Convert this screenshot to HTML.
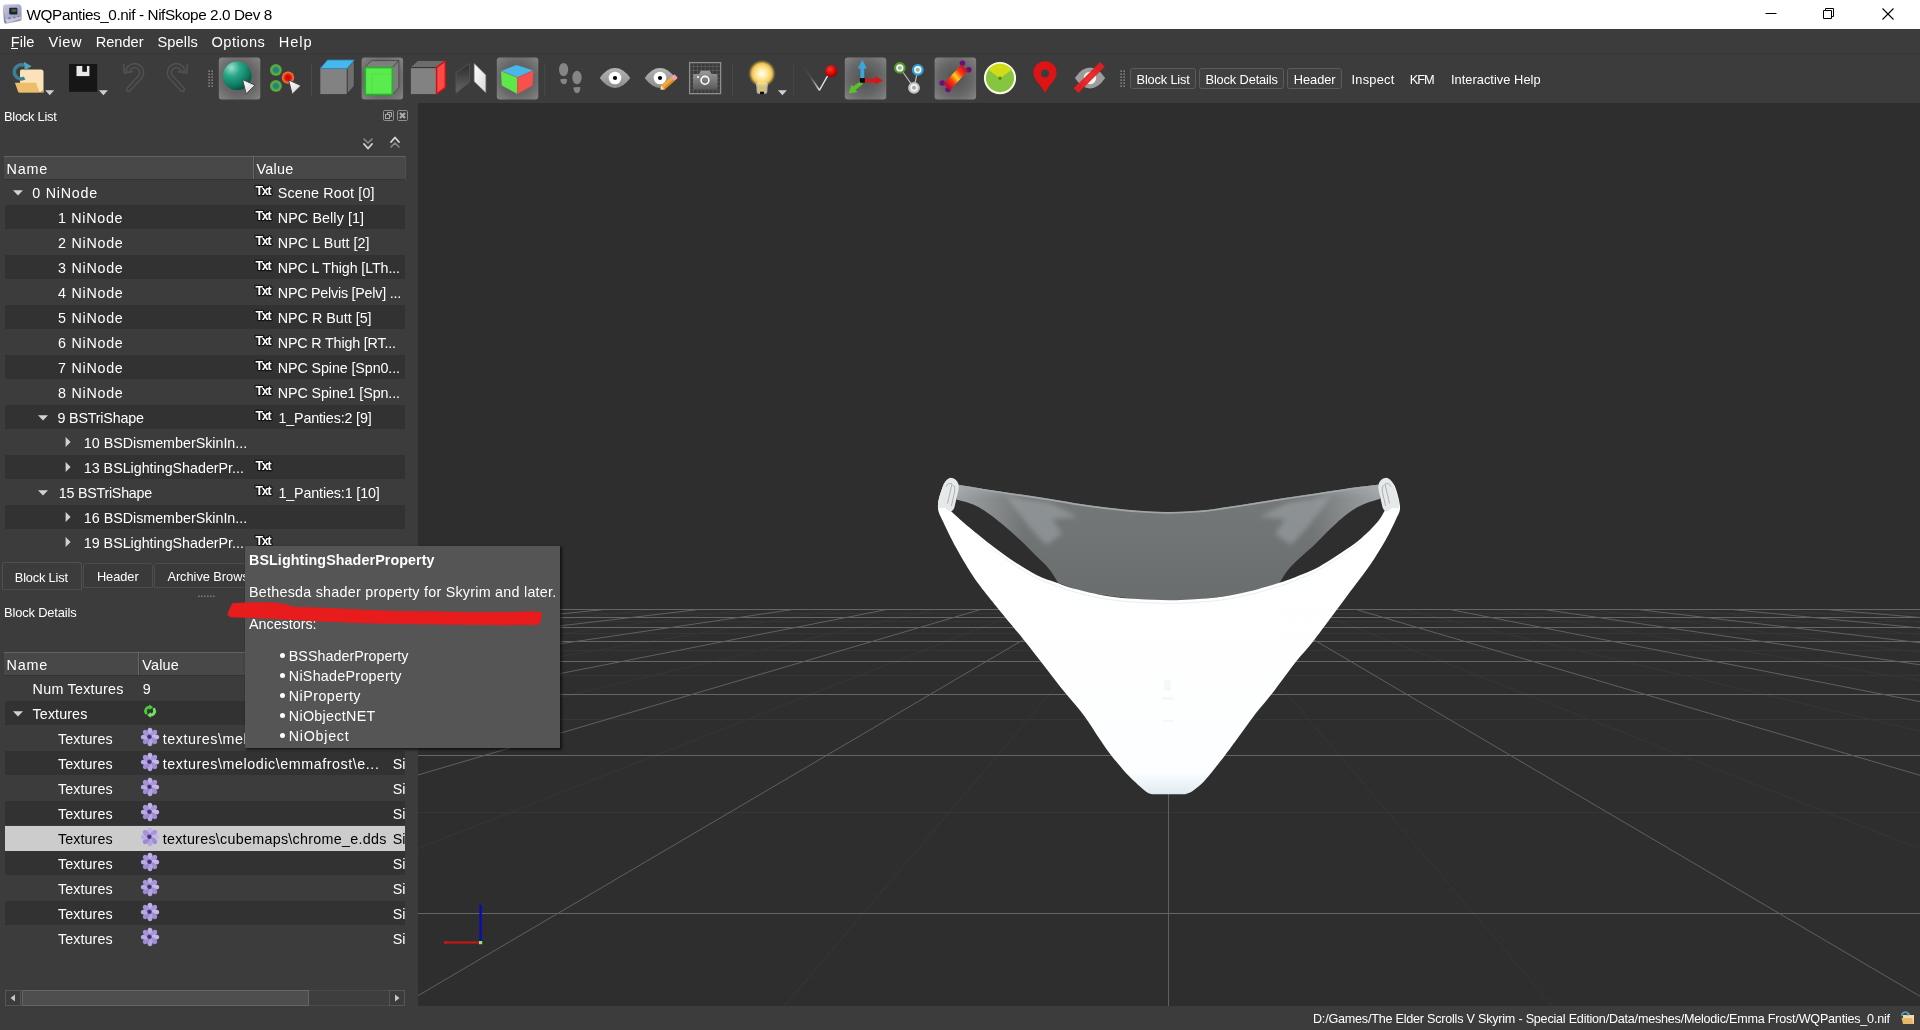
<!DOCTYPE html>
<html><head><meta charset="utf-8"><title>WQPanties_0.nif - NifSkope 2.0 Dev 8</title>
<style>
html,body{margin:0;padding:0}
body{width:1920px;height:1030px;overflow:hidden;position:relative;background:#3c3c3c;font-family:"Liberation Sans",sans-serif;}
.t{position:absolute;white-space:pre;}
.b{position:absolute;}
svg{position:absolute;overflow:visible}
#root{position:absolute;left:0;top:0;width:1920px;height:1030px;overflow:hidden;opacity:.999;background:#3c3c3c}
</style></head><body><div id="root">
<div class="b" style="left:0px;top:0px;width:1920px;height:29px;background:#ffffff;"></div>
<svg style="left:1.5px;top:4px" width="20" height="20" viewBox="0 0 20 20">
<defs><linearGradient id="ai" x1="0" y1="0" x2="1" y2="1"><stop offset="0" stop-color="#c9c9e4"/><stop offset="1" stop-color="#8c8ca8"/></linearGradient></defs>
<path d="M1 2.5 Q1 .5 3 .5 L16 .3 Q19.5 .5 19.6 4 L19.6 15 Q19.5 16.5 18 17 L5 19.6 Q2.5 19.8 2 18 Z" fill="url(#ai)"/>
<path d="M1.2 3 L3 14 L4.5 19.5 Q2.4 19.6 2 18Z" fill="#77779a" opacity=".7"/>
<rect x="7.2" y="3.8" width="8.2" height="6.8" rx="1" fill="#1b2330"/>
<rect x="9.5" y="5" width="5" height="3" fill="#4a6a48" opacity=".8"/>
<circle cx="7.5" cy="14.6" r="1.3" fill="#6d6d90"/><circle cx="12.4" cy="14" r="1.3" fill="#6d6d90"/><circle cx="16.6" cy="13.2" r="1.1" fill="#7d7da0"/>
<path d="M3 15.5 L19 12.5 L19 15 L5 19Z" fill="#e8e8f6" opacity=".55"/>
</svg>
<span class="t" style="left:26.60px;top:3.70px;font-size:15.3px;line-height:21px;color:#000;letter-spacing:-0.415px;">WQPanties_0.nif - NifSkope 2.0 Dev 8</span>
<svg style="left:1740px;top:0" width="180" height="29" viewBox="0 0 180 29" fill="none" stroke="#000" stroke-width="1">
<path d="M25.5 13.5 H36.5"/>
<path d="M83.5 10.5 H91.5 V18.5 H83.5Z M85.5 10.5 V8.5 H93.5 V16.5 H91.5"/>
<path d="M142.5 8.5 L153.5 19.5 M153.5 8.5 L142.5 19.5" stroke-width="1.1"/>
</svg>
<div class="b" style="left:0px;top:29px;width:1920px;height:26px;background:#3c3c3c;"></div>
<div class="b" style="left:0px;top:53px;width:1920px;height:2px;background:#393939;"></div>
<span class="t" style="left:10.70px;top:31.64px;font-size:14.6px;line-height:20px;color:#fff;letter-spacing:0.025px;">File</span>
<span class="t" style="left:48.40px;top:31.64px;font-size:14.6px;line-height:20px;color:#fff;letter-spacing:0.606px;">View</span>
<span class="t" style="left:95.70px;top:31.64px;font-size:14.6px;line-height:20px;color:#fff;">Render</span>
<span class="t" style="left:157.40px;top:31.64px;font-size:14.6px;line-height:20px;color:#fff;letter-spacing:0.147px;">Spells</span>
<span class="t" style="left:211.40px;top:31.64px;font-size:14.6px;line-height:20px;color:#fff;letter-spacing:0.531px;">Options</span>
<span class="t" style="left:278.70px;top:31.64px;font-size:14.6px;line-height:20px;color:#fff;letter-spacing:0.958px;">Help</span>
<div class="b" style="left:11px;top:48px;width:7px;height:1px;background:#fff;"></div>
<svg style="left:0;top:55px" width="1920" height="48" viewBox="0 55 1920 48"><defs>
<radialGradient id="chk" cx=".5" cy=".5" r=".75"><stop offset="0" stop-color="#505050"/><stop offset=".55" stop-color="#686868"/><stop offset="1" stop-color="#8a8a8a"/></radialGradient>
<radialGradient id="sph" cx=".3" cy=".22" r=".85"><stop offset="0" stop-color="#9ee0cc"/><stop offset=".35" stop-color="#2aa88a"/><stop offset=".75" stop-color="#0c7a60"/><stop offset="1" stop-color="#064a3a"/></radialGradient>
<linearGradient id="cur" x1="0" y1="0" x2="1" y2="1"><stop offset="0" stop-color="#ffffff"/><stop offset="1" stop-color="#d2d2d2"/></linearGradient>
<radialGradient id="gdot" cx=".5" cy=".5" r=".5"><stop offset="0" stop-color="#1f7f86"/><stop offset=".45" stop-color="#2a8a70"/><stop offset=".7" stop-color="#62b044"/><stop offset="1" stop-color="#4f9a35"/></radialGradient>
<radialGradient id="rdot" cx=".5" cy=".5" r=".5"><stop offset="0" stop-color="#d00000"/><stop offset=".5" stop-color="#e01808"/><stop offset=".8" stop-color="#f06a30"/><stop offset="1" stop-color="#e8783a"/></radialGradient>
<linearGradient id="eye" x1="0" y1="0" x2="0" y2="1"><stop offset="0" stop-color="#b4b4b4"/><stop offset="1" stop-color="#8c8c8c"/></linearGradient>
<radialGradient id="bulb" cx=".5" cy=".5" r=".5"><stop offset="0" stop-color="#fffef4"/><stop offset=".25" stop-color="#fff3c0"/><stop offset=".55" stop-color="#fbdc78"/><stop offset=".74" stop-color="#f2c654" stop-opacity=".95"/><stop offset=".86" stop-color="#e6b840" stop-opacity=".45"/><stop offset="1" stop-color="#d8aa30" stop-opacity="0"/></radialGradient>
<radialGradient id="rball" cx=".4" cy=".35" r=".65"><stop offset="0" stop-color="#ff3a2a"/><stop offset=".6" stop-color="#d80808"/><stop offset="1" stop-color="#8e0000"/></radialGradient>
<linearGradient id="bone" gradientUnits="userSpaceOnUse" x1="941" y1="88" x2="969" y2="63"><stop offset="0" stop-color="#7a0a7a"/><stop offset=".18" stop-color="#c8102a"/><stop offset=".35" stop-color="#ff3a10"/><stop offset=".5" stop-color="#ffd21e"/><stop offset=".65" stop-color="#ff3a10"/><stop offset=".82" stop-color="#c8102a"/><stop offset="1" stop-color="#7a0a7a"/></linearGradient>
<linearGradient id="camg" x1="0" y1="0" x2="0" y2="1"><stop offset="0" stop-color="#9a9a9a"/><stop offset="1" stop-color="#5c5c5c"/></linearGradient>
<linearGradient id="dkp" x1="0" y1="0" x2="0" y2="1"><stop offset="0" stop-color="#2c2c2c"/><stop offset="1" stop-color="#666"/></linearGradient>
<linearGradient id="whp" x1="0" y1="0" x2="1" y2="1"><stop offset="0" stop-color="#ffffff"/><stop offset="1" stop-color="#d8d8d8"/></linearGradient>
<filter id="b1"><feGaussianBlur stdDeviation="0.75"/></filter>
<filter id="b2"><feGaussianBlur stdDeviation="1.6"/></filter>
</defs><g>
<path d="M20 71.2 Q20 69.6 21.6 69.6 H41 Q43.5 69.6 43.5 72.2 V92.2 H20Z" fill="#fbe2b8"/>
<path d="M14.9 82.8 H36 L39.6 92.4 H18.4Z" fill="#eebd6c"/>
<path d="M39.6 92.4 H43.5 V89.5Z" fill="#dba653"/>
<path d="M24.6 78 A7 7 0 1 1 24 65.4" fill="none" stroke="#3c8095" stroke-width="3.5"/>
<path d="M23.8 61.8 L31.6 66.2 L24.8 70.6Z" fill="#55a3b9"/>
</g><path d="M45.2 90.2 h9 l-4.5 5z" fill="#cfcfcf"/><rect x="69" y="64" width="28.2" height="27.8" fill="#161616"/><rect x="76.5" y="66" width="12.9" height="10.1" fill="#e9e9e9"/><rect x="82.3" y="66" width="4.6" height="5.8" fill="#161616"/><path d="M98.9 90.2 h9 l-4.5 5z" fill="#cfcfcf"/><g fill="none" stroke-linecap="round" stroke-linejoin="round">
<g stroke="#505050" stroke-width="5.6"><path d="M128.6 89.4 L140.6 76.4 A7 7 0 1 0 128.2 70"/><path d="M169.4 89.4 L157.4 76.4 A7 7 0 1 1 169.8 70" transform="translate(13 0)"/></g>
<g stroke="#3c3c3c" stroke-width="2.4"><path d="M128.6 89.4 L140.6 76.4 A7 7 0 1 0 128.2 70"/><path d="M169.4 89.4 L157.4 76.4 A7 7 0 1 1 169.8 70" transform="translate(13 0)"/></g>
<path d="M123.6 64.5 L124.4 73.2 L132.6 71.6" stroke="#505050" stroke-width="1.8"/><path d="M187.4 64.5 L186.6 73.2 L178.4 71.6" stroke="#505050" stroke-width="1.8"/>
</g><rect x="208.3" y="70.3" width="1.7" height="1.7" fill="#7a7a7a"/><rect x="208.3" y="73.3" width="1.7" height="1.7" fill="#7a7a7a"/><rect x="208.3" y="76.3" width="1.7" height="1.7" fill="#7a7a7a"/><rect x="208.3" y="79.3" width="1.7" height="1.7" fill="#7a7a7a"/><rect x="208.3" y="82.3" width="1.7" height="1.7" fill="#7a7a7a"/><rect x="208.3" y="85.3" width="1.7" height="1.7" fill="#7a7a7a"/><rect x="211.3" y="70.3" width="1.7" height="1.7" fill="#7a7a7a"/><rect x="211.3" y="73.3" width="1.7" height="1.7" fill="#7a7a7a"/><rect x="211.3" y="76.3" width="1.7" height="1.7" fill="#7a7a7a"/><rect x="211.3" y="79.3" width="1.7" height="1.7" fill="#7a7a7a"/><rect x="211.3" y="82.3" width="1.7" height="1.7" fill="#7a7a7a"/><rect x="211.3" y="85.3" width="1.7" height="1.7" fill="#7a7a7a"/><rect x="218.8" y="57.5" width="41.5" height="42" rx="3" fill="url(#chk)"/><circle cx="237.2" cy="75.8" r="14.3" fill="url(#sph)"/><path d="M242.6 79.6 L255 85.2 L246.2 93.9Z" fill="url(#cur)" stroke="#3a3a3a" stroke-width=".9" stroke-linejoin="round"/><circle cx="275.9" cy="70" r="6" fill="url(#gdot)"/><circle cx="275.9" cy="86" r="6" fill="url(#gdot)"/><circle cx="288" cy="77.6" r="6.2" fill="url(#rdot)"/><path d="M288.6 80 L301 85.6 L292.2 94.3Z" fill="url(#cur)" stroke="#3a3a3a" stroke-width=".9" stroke-linejoin="round"/><path d="M311.5 64 V96" stroke="#4a4a4a" stroke-width="1"/><path d="M320.3 68.5 H347.2 V94.1 H320.3Z" fill="#828282"/><path d="M347.2 68.5 L354.3 60.2 V86 L347.2 94.1Z" fill="#6e6e6e" stroke="#2e2e2e" stroke-width=".8"/><path d="M320.3 68.5 L327.5 60 H354.3 L347.2 68.5Z" fill="#45b9ee" stroke="#2a86b8" stroke-width=".8"/><rect x="361.6" y="57.5" width="41.5" height="42" rx="3" fill="url(#chk)"/><path d="M365 67.4 L371.5 60.6 H398.8 V87.5 L392.5 94.6" fill="#7e7e7e" stroke="#4a4a4a" stroke-width=".9"/><path d="M392.5 67.4 L398.8 60.6" stroke="#3c3c3c" stroke-width=".9"/><rect x="365.3" y="67.6" width="27" height="26.9" fill="#5aec4e" stroke="#26b42a" stroke-width="1.6"/><path d="M372 74 H392 M372 74 V94" stroke="#48d840" stroke-width="1" opacity=".6"/><path d="M410.9 67.2 H436.1 V94.1 H410.9Z" fill="#828282"/><path d="M410.9 67.2 L418 60.9 H445.5 L436.1 67.2Z" fill="#6c6c6c"/><path d="M410.9 67.6 H436" stroke="#2e2e2e" stroke-width="1"/><path d="M436.6 67.4 L445.2 61.2 V87.6 L436.6 94Z" fill="#ff4a48" stroke="#cc1414" stroke-width="1.5" stroke-linejoin="round"/><path d="M456 72.5 L469.6 63.5 V82 L456 93Z" fill="url(#dkp)" stroke="#585858" stroke-width=".8"/><path d="M474.2 63.5 L485.8 75 V92.8 L474.2 81.5Z" fill="url(#whp)" stroke="#8a8a8a" stroke-width=".6"/><rect x="496.8" y="57.5" width="41.5" height="42" rx="3" fill="url(#chk)"/><path d="M501 71 L516.5 65 L533.3 70.5 L517.5 77.5Z" fill="#48b6ea"/><path d="M501 71 L517.5 77.5 V94 L501.8 85.5Z" fill="#5fe84a"/><path d="M517.5 77.5 L533.3 70.5 L532.5 85.5 L517.5 94Z" fill="#f8504c"/><path d="M501 71 L517.5 77.5 L533.3 70.5 M517.5 77.5 V94" fill="none" stroke="#d8382a" stroke-width=".6" opacity=".6"/><path d="M544.6 64 V96" stroke="#484848" stroke-width="1"/><g fill="#858585">
<ellipse cx="563.6" cy="69.5" rx="4.6" ry="6.6"/><path d="M560.2 79.6 Q563.5 78.3 567 79.2 Q567.3 84.2 564 84.3 Q560.8 84 560.2 79.6Z"/>
<ellipse cx="577" cy="77.5" rx="4.7" ry="6.8"/><path d="M573.3 87.5 Q576.6 86.5 580.4 87.3 Q580.3 93 577 93.2 Q574 93 573.3 87.5Z"/>
</g><path d="M599.7 78 Q607 68 615 68.1 Q623 68 630.3 78 Q623 88 615 87.9 Q607 88 599.7 78Z" fill="url(#eye)"/><circle cx="615" cy="78" r="6.3" fill="#fff"/><circle cx="615" cy="78" r="2.1" fill="#000"/><path d="M644.7 78 Q652 68 660 68.1 Q668 68 675.3 78 Q668 88 660 87.9 Q652 88 644.7 78Z" fill="url(#eye)"/><circle cx="660" cy="78" r="6.3" fill="#fff"/><circle cx="660" cy="78" r="2.1" fill="#000"/><g transform="translate(660.5 89.6) rotate(-41)"><path d="M0 0 L3.2 -2.6 H16 V2.6 H3.2Z" fill="#f5a83a"/><path d="M0 0 L3.2 -2.6 V2.6Z" fill="#f5deb0"/><path d="M16 -2.6 H19.6 Q20.8 -2.6 20.8 -1.4 V1.4 Q20.8 2.6 19.6 2.6 H16Z" fill="#f0a0a8"/><path d="M3.2 0.6 H16 V2.6 H3.2Z" fill="#d98a20"/></g><rect x="689.6" y="62.6" width="31" height="31" fill="#3a3a3a" stroke="#8e8e8e" stroke-width="1.3"/><g stroke="#5c5c5c" stroke-width=".8"><path d="M693.5 63.5 V93"/><path d="M697.4 63.5 V93"/><path d="M701.3 63.5 V93"/><path d="M705.2 63.5 V93"/><path d="M709.1 63.5 V93"/><path d="M713.0 63.5 V93"/><path d="M716.9 63.5 V93"/><path d="M690.5 66.5 H720"/><path d="M690.5 70.4 H720"/><path d="M690.5 74.3 H720"/><path d="M690.5 78.2 H720"/><path d="M690.5 82.1 H720"/><path d="M690.5 86.0 H720"/><path d="M690.5 89.9 H720"/></g><path d="M693 75.5 Q693 74 694.5 74 H699 L700.8 70.8 H709.8 L711.6 74 H716 Q717.5 74 717.5 75.5 V87.5 Q717.5 89 716 89 H694.5 Q693 89 693 87.5Z" fill="url(#camg)"/><circle cx="705" cy="80.3" r="3.9" fill="none" stroke="#fff" stroke-width="1.6"/><rect x="703.6" y="78.9" width="2.8" height="2.8" fill="#fff" opacity=".0"/><circle cx="698" cy="77" r="1" fill="#fff"/><path d="M732.5 64 V96" stroke="#484848" stroke-width="1"/><circle cx="762" cy="73.6" r="13.8" fill="url(#bulb)"/><path d="M756.3 82 Q757.3 87 757.3 91.3 Q757.3 93.2 759.3 93.2 H764.7 Q766.7 93.2 766.7 91.3 Q766.7 87 767.7 82" fill="#f6e08c" fill-opacity=".8" stroke="#b4b4b4" stroke-width="1.3"/><rect x="760" y="91.7" width="4" height="2.4" fill="#0a0a0a"/><path d="M777.9 90.2 h9 l-4.5 5z" fill="#cfcfcf"/><path d="M793.7 64 V96" stroke="#484848" stroke-width="1"/><defs><linearGradient id="vv" gradientUnits="userSpaceOnUse" x1="803" y1="65" x2="819" y2="90"><stop offset="0" stop-color="#3c3c3c"/><stop offset=".5" stop-color="#4e4e4e"/><stop offset="1" stop-color="#d8d8d8"/></linearGradient></defs><path d="M803 65.5 L819.3 90" stroke="url(#vv)" stroke-width="1.6" fill="none"/><path d="M819.3 90.5 L827.5 76" stroke="#e6e6e6" stroke-width="1.5" fill="none"/><circle cx="831.3" cy="71.2" r="6.1" fill="url(#rball)"/><rect x="844.8" y="57.5" width="41.5" height="42" rx="3" fill="url(#chk)"/><path d="M860.4 78.5 V68.5 H857.8 L862.3 59.8 L866.8 68.5 H864.2 V78.5Z" fill="#3aa6dc"/><path d="M865 78.7 H875 V76 L883 80.4 L875 84.8 V82.2 H865Z" fill="#d81616"/><path d="M860.5 81 L853 86.6 L851.6 84.6 L848.6 93.2 L857.4 92.2 L855.6 89.8 L863 84Z" fill="#5cbf2e"/><rect x="859.9" y="78.1" width="5" height="4.6" fill="#0a0a0a"/><path d="M900 68 L914 87.8 L917.8 69.8" fill="none" stroke="#bdbdbd" stroke-width="1.2"/><circle cx="899.8" cy="67.9" r="5.9" fill="#4f9a28"/><circle cx="899.8" cy="67.9" r="3.7" fill="#eef6ee"/><circle cx="899.8" cy="67.9" r="2" fill="#a9a9a9"/><circle cx="917.8" cy="69.8" r="5.9" fill="#2fa0d8"/><circle cx="917.8" cy="69.8" r="3.7" fill="#eef6ee"/><circle cx="917.8" cy="69.8" r="2" fill="#a9a9a9"/><circle cx="914" cy="87.8" r="5.9" fill="#c4c4c4"/><circle cx="914" cy="87.8" r="3.7" fill="#eef6ee"/><circle cx="914" cy="87.8" r="2" fill="#a9a9a9"/><rect x="934.6" y="57.5" width="41.5" height="42" rx="3" fill="url(#chk)"/><g filter="url(#b1)"><circle cx="942.2" cy="83" r="2.7" fill="#6c0c7c"/><circle cx="948" cy="89.6" r="2.7" fill="#6c0c7c"/><circle cx="962.4" cy="63.2" r="2.7" fill="#6c0c7c"/><circle cx="968.8" cy="69.8" r="2.7" fill="#6c0c7c"/><path d="M943.4 84 L961.4 64.6 L968 70.8 L950 90.2Z" fill="url(#bone)"/></g><circle cx="1000" cy="78.1" r="15.1" fill="#86c540" stroke="#fdfde8" stroke-width="2"/><path d="M1000 78.4 L988.2 69.6 A14.6 14.6 0 0 1 1011.8 69.6Z" fill="#d3dc18"/><circle cx="1000" cy="78.2" r="1.6" fill="#4a8a10"/><path d="M1045 92.8 C1041 85 1033.4 79.6 1033.4 72.8 A11.6 11.6 0 0 1 1056.6 72.8 C1056.6 79.6 1049 85 1045 92.8Z M1045 69.4 A4.1 4.1 0 0 0 1045 77.6 A4.1 4.1 0 0 0 1045 69.4Z" fill="#de1414" fill-rule="evenodd"/><path d="M1074.8 78 Q1082 67.6 1090 67.6 Q1098 67.6 1105.2 78 Q1098 88.4 1090 88.4 Q1082 88.4 1074.8 78Z" fill="#9c9c9c"/><circle cx="1090" cy="78" r="6.2" fill="#f4f4f4"/><path d="M1076 90.6 L1102.4 64.4" stroke="#e81e1e" stroke-width="6.6" opacity=".93"/><rect x="1120.3" y="70.3" width="1.7" height="1.7" fill="#7a7a7a"/><rect x="1120.3" y="73.3" width="1.7" height="1.7" fill="#7a7a7a"/><rect x="1120.3" y="76.3" width="1.7" height="1.7" fill="#7a7a7a"/><rect x="1120.3" y="79.3" width="1.7" height="1.7" fill="#7a7a7a"/><rect x="1120.3" y="82.3" width="1.7" height="1.7" fill="#7a7a7a"/><rect x="1120.3" y="85.3" width="1.7" height="1.7" fill="#7a7a7a"/><rect x="1123.3" y="70.3" width="1.7" height="1.7" fill="#7a7a7a"/><rect x="1123.3" y="73.3" width="1.7" height="1.7" fill="#7a7a7a"/><rect x="1123.3" y="76.3" width="1.7" height="1.7" fill="#7a7a7a"/><rect x="1123.3" y="79.3" width="1.7" height="1.7" fill="#7a7a7a"/><rect x="1123.3" y="82.3" width="1.7" height="1.7" fill="#7a7a7a"/><rect x="1123.3" y="85.3" width="1.7" height="1.7" fill="#7a7a7a"/></svg>
<div class="b" style="left:1130px;top:68px;width:66px;height:21px;background:#404040;box-sizing:border-box;border:1px solid #5c5c5c;border-radius:2.5px;"></div>
<div class="b" style="left:1199px;top:68px;width:85px;height:21px;background:#404040;box-sizing:border-box;border:1px solid #5c5c5c;border-radius:2.5px;"></div>
<div class="b" style="left:1287px;top:68px;width:55px;height:21px;background:#404040;box-sizing:border-box;border:1px solid #5c5c5c;border-radius:2.5px;"></div>
<span class="t" style="left:1136.60px;top:70.86px;font-size:12.8px;line-height:18px;color:#fff;letter-spacing:-0.175px;">Block List</span>
<span class="t" style="left:1205.50px;top:70.86px;font-size:12.8px;line-height:18px;color:#fff;letter-spacing:-0.132px;">Block Details</span>
<span class="t" style="left:1293.80px;top:70.86px;font-size:12.8px;line-height:18px;color:#fff;letter-spacing:-0.036px;">Header</span>
<span class="t" style="left:1351.50px;top:70.86px;font-size:12.8px;line-height:18px;color:#fff;letter-spacing:0.239px;">Inspect</span>
<span class="t" style="left:1409.80px;top:70.86px;font-size:12.8px;line-height:18px;color:#fff;letter-spacing:-1.060px;">KFM</span>
<span class="t" style="left:1450.90px;top:70.86px;font-size:12.8px;line-height:18px;color:#fff;letter-spacing:0.051px;">Interactive Help</span>
<span class="t" style="left:4.00px;top:108.03px;font-size:12.9px;line-height:18px;color:#fff;letter-spacing:-0.267px;">Block List</span>
<svg style="left:383px;top:110px" width="26" height="12" viewBox="0 0 26 12" fill="none" stroke="#8f8f8f" stroke-width="1">
<rect x=".5" y=".5" width="10" height="10" rx="1.2"/><rect x="14.5" y=".5" width="10" height="10" rx="1.2"/>
<rect x="2.5" y="4.5" width="4" height="4" stroke="#a8a8a8"/><path d="M4.5 4.5 V2.5 H8.5 V6.5 H6.5" stroke="#a8a8a8"/>
<path d="M17 3 L22 8 M22 3 L17 8" stroke="#adadad" stroke-width="2.2"/>
</svg>
<svg style="left:360px;top:134px" width="44" height="20" viewBox="0 0 44 20" fill="none" stroke-linecap="round" stroke-linejoin="round">
<path d="M4 5 L8 9 L12 5" stroke="#8a8a8a" stroke-width="1.6"/><path d="M4 10 L8 14.5 L12 10" stroke="#d8d8d8" stroke-width="1.8"/>
<path d="M31 8 L35 3.5 L39 8" stroke="#d8d8d8" stroke-width="1.8"/><path d="M31 13 L35 9 L39 13" stroke="#8a8a8a" stroke-width="1.6"/>
</svg>
<div class="b" style="left:4px;top:156px;width:401px;height:24px;background:#484848;box-sizing:border-box;border-top:1px solid #626262;border-bottom:1px solid #343434;"></div>
<div class="b" style="left:253px;top:156px;width:1px;height:23px;background:#686868;"></div>
<div class="b" style="left:254px;top:157px;width:1px;height:22px;background:#3c3c3c;"></div>
<div class="b" style="left:405px;top:156px;width:1px;height:24px;background:#505050;"></div>
<span class="t" style="left:6.60px;top:159.21px;font-size:14.4px;line-height:20px;color:#fff;letter-spacing:0.796px;">Name</span>
<span class="t" style="left:256.60px;top:159.21px;font-size:14.4px;line-height:20px;color:#fff;letter-spacing:0.235px;">Value</span>
<svg style="left:11.5px;top:188.6px" width="12" height="8" viewBox="0 0 12 8"><path d="M1 1.2 H11 L6 6.6Z" fill="#d2d2d2"/></svg>
<span class="t" style="left:32.20px;top:182.95px;font-size:14.3px;line-height:20px;color:#fff;letter-spacing:0.783px;">0 NiNode</span>
<svg style="left:255px;top:184px" width="20" height="14" viewBox="0 0 20 14"><text x="0.5" y="10.6" font-family="Liberation Sans,sans-serif" font-weight="bold" font-size="12.4" letter-spacing="-1.25" fill="#fff" stroke="#161616" stroke-width="2.7" paint-order="stroke" stroke-linejoin="round">Txt</text></svg>
<span class="t" style="left:277.80px;top:182.95px;font-size:14.3px;line-height:20px;color:#fff;letter-spacing:0.169px;">Scene Root [0]</span>
<div class="b" style="left:5px;top:205px;width:400px;height:24px;background:#323232;"></div>
<span class="t" style="left:58.00px;top:207.95px;font-size:14.3px;line-height:20px;color:#fff;letter-spacing:0.698px;">1 NiNode</span>
<svg style="left:255px;top:209px" width="20" height="14" viewBox="0 0 20 14"><text x="0.5" y="10.6" font-family="Liberation Sans,sans-serif" font-weight="bold" font-size="12.4" letter-spacing="-1.25" fill="#fff" stroke="#161616" stroke-width="2.7" paint-order="stroke" stroke-linejoin="round">Txt</text></svg>
<span class="t" style="left:277.80px;top:207.95px;font-size:14.3px;line-height:20px;color:#fff;letter-spacing:0.106px;">NPC Belly [1]</span>
<span class="t" style="left:58.00px;top:232.95px;font-size:14.3px;line-height:20px;color:#fff;letter-spacing:0.741px;">2 NiNode</span>
<svg style="left:255px;top:234px" width="20" height="14" viewBox="0 0 20 14"><text x="0.5" y="10.6" font-family="Liberation Sans,sans-serif" font-weight="bold" font-size="12.4" letter-spacing="-1.25" fill="#fff" stroke="#161616" stroke-width="2.7" paint-order="stroke" stroke-linejoin="round">Txt</text></svg>
<span class="t" style="left:277.80px;top:232.95px;font-size:14.3px;line-height:20px;color:#fff;letter-spacing:0.072px;">NPC L Butt [2]</span>
<div class="b" style="left:5px;top:255px;width:400px;height:24px;background:#323232;"></div>
<span class="t" style="left:58.00px;top:257.95px;font-size:14.3px;line-height:20px;color:#fff;letter-spacing:0.741px;">3 NiNode</span>
<svg style="left:255px;top:259px" width="20" height="14" viewBox="0 0 20 14"><text x="0.5" y="10.6" font-family="Liberation Sans,sans-serif" font-weight="bold" font-size="12.4" letter-spacing="-1.25" fill="#fff" stroke="#161616" stroke-width="2.7" paint-order="stroke" stroke-linejoin="round">Txt</text></svg>
<span class="t" style="left:277.80px;top:257.95px;font-size:14.3px;line-height:20px;color:#fff;letter-spacing:-0.123px;">NPC L Thigh [LTh...</span>
<span class="t" style="left:58.00px;top:282.95px;font-size:14.3px;line-height:20px;color:#fff;letter-spacing:0.741px;">4 NiNode</span>
<svg style="left:255px;top:284px" width="20" height="14" viewBox="0 0 20 14"><text x="0.5" y="10.6" font-family="Liberation Sans,sans-serif" font-weight="bold" font-size="12.4" letter-spacing="-1.25" fill="#fff" stroke="#161616" stroke-width="2.7" paint-order="stroke" stroke-linejoin="round">Txt</text></svg>
<span class="t" style="left:277.80px;top:282.95px;font-size:14.3px;line-height:20px;color:#fff;letter-spacing:-0.227px;">NPC Pelvis [Pelv] ...</span>
<div class="b" style="left:5px;top:305px;width:400px;height:24px;background:#323232;"></div>
<span class="t" style="left:58.00px;top:307.95px;font-size:14.3px;line-height:20px;color:#fff;letter-spacing:0.741px;">5 NiNode</span>
<svg style="left:255px;top:309px" width="20" height="14" viewBox="0 0 20 14"><text x="0.5" y="10.6" font-family="Liberation Sans,sans-serif" font-weight="bold" font-size="12.4" letter-spacing="-1.25" fill="#fff" stroke="#161616" stroke-width="2.7" paint-order="stroke" stroke-linejoin="round">Txt</text></svg>
<span class="t" style="left:277.80px;top:307.95px;font-size:14.3px;line-height:20px;color:#fff;">NPC R Butt [5]</span>
<span class="t" style="left:58.00px;top:332.95px;font-size:14.3px;line-height:20px;color:#fff;letter-spacing:0.741px;">6 NiNode</span>
<svg style="left:255px;top:334px" width="20" height="14" viewBox="0 0 20 14"><text x="0.5" y="10.6" font-family="Liberation Sans,sans-serif" font-weight="bold" font-size="12.4" letter-spacing="-1.25" fill="#fff" stroke="#161616" stroke-width="2.7" paint-order="stroke" stroke-linejoin="round">Txt</text></svg>
<span class="t" style="left:277.80px;top:332.95px;font-size:14.3px;line-height:20px;color:#fff;letter-spacing:-0.162px;">NPC R Thigh [RT...</span>
<div class="b" style="left:5px;top:355px;width:400px;height:24px;background:#323232;"></div>
<span class="t" style="left:58.00px;top:357.95px;font-size:14.3px;line-height:20px;color:#fff;letter-spacing:0.741px;">7 NiNode</span>
<svg style="left:255px;top:359px" width="20" height="14" viewBox="0 0 20 14"><text x="0.5" y="10.6" font-family="Liberation Sans,sans-serif" font-weight="bold" font-size="12.4" letter-spacing="-1.25" fill="#fff" stroke="#161616" stroke-width="2.7" paint-order="stroke" stroke-linejoin="round">Txt</text></svg>
<span class="t" style="left:277.80px;top:357.95px;font-size:14.3px;line-height:20px;color:#fff;letter-spacing:-0.100px;">NPC Spine [Spn0...</span>
<span class="t" style="left:58.00px;top:382.95px;font-size:14.3px;line-height:20px;color:#fff;letter-spacing:0.741px;">8 NiNode</span>
<svg style="left:255px;top:384px" width="20" height="14" viewBox="0 0 20 14"><text x="0.5" y="10.6" font-family="Liberation Sans,sans-serif" font-weight="bold" font-size="12.4" letter-spacing="-1.25" fill="#fff" stroke="#161616" stroke-width="2.7" paint-order="stroke" stroke-linejoin="round">Txt</text></svg>
<span class="t" style="left:277.80px;top:382.95px;font-size:14.3px;line-height:20px;color:#fff;letter-spacing:-0.100px;">NPC Spine1 [Spn...</span>
<div class="b" style="left:5px;top:405px;width:400px;height:24px;background:#323232;"></div>
<svg style="left:36.8px;top:413.6px" width="12" height="8" viewBox="0 0 12 8"><path d="M1 1.2 H11 L6 6.6Z" fill="#d2d2d2"/></svg>
<span class="t" style="left:57.50px;top:407.95px;font-size:14.3px;line-height:20px;color:#fff;letter-spacing:-0.181px;">9 BSTriShape</span>
<svg style="left:255px;top:409px" width="20" height="14" viewBox="0 0 20 14"><text x="0.5" y="10.6" font-family="Liberation Sans,sans-serif" font-weight="bold" font-size="12.4" letter-spacing="-1.25" fill="#fff" stroke="#161616" stroke-width="2.7" paint-order="stroke" stroke-linejoin="round">Txt</text></svg>
<span class="t" style="left:278.40px;top:407.95px;font-size:14.3px;line-height:20px;color:#fff;letter-spacing:-0.150px;">1_Panties:2 [9]</span>
<svg style="left:63.8px;top:436.3px" width="8" height="12" viewBox="0 0 8 12"><path d="M1.6 1 V11 L6.6 6Z" fill="#d2d2d2"/></svg>
<span class="t" style="left:83.80px;top:432.95px;font-size:14.3px;line-height:20px;color:#fff;letter-spacing:-0.014px;">10 BSDismemberSkinIn...</span>
<div class="b" style="left:5px;top:455px;width:400px;height:24px;background:#323232;"></div>
<svg style="left:63.8px;top:461.3px" width="8" height="12" viewBox="0 0 8 12"><path d="M1.6 1 V11 L6.6 6Z" fill="#d2d2d2"/></svg>
<span class="t" style="left:83.80px;top:457.95px;font-size:14.3px;line-height:20px;color:#fff;letter-spacing:-0.017px;">13 BSLightingShaderPr...</span>
<svg style="left:255px;top:459px" width="20" height="14" viewBox="0 0 20 14"><text x="0.5" y="10.6" font-family="Liberation Sans,sans-serif" font-weight="bold" font-size="12.4" letter-spacing="-1.25" fill="#fff" stroke="#161616" stroke-width="2.7" paint-order="stroke" stroke-linejoin="round">Txt</text></svg>
<svg style="left:36.8px;top:488.6px" width="12" height="8" viewBox="0 0 12 8"><path d="M1 1.2 H11 L6 6.6Z" fill="#d2d2d2"/></svg>
<span class="t" style="left:58.80px;top:482.95px;font-size:14.3px;line-height:20px;color:#fff;letter-spacing:-0.254px;">15 BSTriShape</span>
<svg style="left:255px;top:484px" width="20" height="14" viewBox="0 0 20 14"><text x="0.5" y="10.6" font-family="Liberation Sans,sans-serif" font-weight="bold" font-size="12.4" letter-spacing="-1.25" fill="#fff" stroke="#161616" stroke-width="2.7" paint-order="stroke" stroke-linejoin="round">Txt</text></svg>
<span class="t" style="left:278.40px;top:482.95px;font-size:14.3px;line-height:20px;color:#fff;letter-spacing:-0.130px;">1_Panties:1 [10]</span>
<div class="b" style="left:5px;top:505px;width:400px;height:24px;background:#323232;"></div>
<svg style="left:63.8px;top:511.29999999999995px" width="8" height="12" viewBox="0 0 8 12"><path d="M1.6 1 V11 L6.6 6Z" fill="#d2d2d2"/></svg>
<span class="t" style="left:83.80px;top:507.95px;font-size:14.3px;line-height:20px;color:#fff;letter-spacing:-0.014px;">16 BSDismemberSkinIn...</span>
<svg style="left:63.8px;top:536.3px" width="8" height="12" viewBox="0 0 8 12"><path d="M1.6 1 V11 L6.6 6Z" fill="#d2d2d2"/></svg>
<span class="t" style="left:83.80px;top:532.95px;font-size:14.3px;line-height:20px;color:#fff;letter-spacing:-0.017px;">19 BSLightingShaderPr...</span>
<svg style="left:255px;top:534px" width="20" height="14" viewBox="0 0 20 14"><text x="0.5" y="10.6" font-family="Liberation Sans,sans-serif" font-weight="bold" font-size="12.4" letter-spacing="-1.25" fill="#fff" stroke="#161616" stroke-width="2.7" paint-order="stroke" stroke-linejoin="round">Txt</text></svg>
<div class="b" style="left:2px;top:562px;width:80px;height:28px;background:#3c3c3c;box-sizing:border-box;border:1px solid #505050;border-bottom-color:#4a4a4a;border-radius:3px 3px 0 0;"></div>
<div class="b" style="left:83px;top:563px;width:70px;height:25px;background:#3a3a3a;box-sizing:border-box;border:1px solid #4c4c4c;border-radius:3px 3px 0 0;"></div>
<div class="b" style="left:154px;top:563px;width:120px;height:25px;background:#3a3a3a;box-sizing:border-box;border:1px solid #4c4c4c;border-radius:3px 3px 0 0;"></div>
<span class="t" style="left:14.80px;top:568.56px;font-size:12.8px;line-height:18px;color:#fff;letter-spacing:-0.175px;">Block List</span>
<span class="t" style="left:96.90px;top:568.06px;font-size:12.8px;line-height:18px;color:#fff;letter-spacing:-0.036px;">Header</span>
<span class="t" style="left:167.40px;top:568.06px;font-size:12.8px;line-height:18px;color:#fff;letter-spacing:-0.033px;">Archive Browser</span>
<svg style="left:197px;top:595px" width="20" height="3" viewBox="0 0 20 3"><rect x="1" y="0.5" width="1.6" height="1.6" fill="#7a7a7a"/><rect x="4" y="0.5" width="1.6" height="1.6" fill="#7a7a7a"/><rect x="7" y="0.5" width="1.6" height="1.6" fill="#7a7a7a"/><rect x="10" y="0.5" width="1.6" height="1.6" fill="#7a7a7a"/><rect x="13" y="0.5" width="1.6" height="1.6" fill="#7a7a7a"/><rect x="16" y="0.5" width="1.6" height="1.6" fill="#7a7a7a"/></svg>
<span class="t" style="left:4.00px;top:604.03px;font-size:12.9px;line-height:18px;color:#fff;letter-spacing:-0.155px;">Block Details</span>
<div class="b" style="left:4px;top:652px;width:401px;height:24px;background:#484848;box-sizing:border-box;border-top:1px solid #626262;border-bottom:1px solid #343434;"></div>
<div class="b" style="left:138px;top:652px;width:1px;height:23px;background:#686868;"></div>
<div class="b" style="left:139px;top:653px;width:1px;height:22px;background:#3c3c3c;"></div>
<div class="b" style="left:405px;top:652px;width:1px;height:24px;background:#505050;"></div>
<span class="t" style="left:6.60px;top:655.21px;font-size:14.4px;line-height:20px;color:#fff;letter-spacing:0.796px;">Name</span>
<span class="t" style="left:142.20px;top:655.21px;font-size:14.4px;line-height:20px;color:#fff;letter-spacing:0.235px;">Value</span>
<span class="t" style="left:32.60px;top:678.95px;font-size:14.3px;line-height:20px;color:#fff;letter-spacing:0.259px;">Num Textures</span>
<span class="t" style="left:142.70px;top:678.95px;font-size:14.3px;line-height:20px;color:#fff;">9</span>
<div class="b" style="left:5px;top:701px;width:400px;height:24px;background:#323232;"></div>
<svg style="left:11.5px;top:709.6px" width="12" height="8" viewBox="0 0 12 8"><path d="M1 1.2 H11 L6 6.6Z" fill="#d2d2d2"/></svg>
<span class="t" style="left:32.60px;top:703.95px;font-size:14.3px;line-height:20px;color:#fff;letter-spacing:0.094px;">Textures</span>
<svg style="left:143px;top:703.6px" width="14.2" height="14.2" viewBox="0 0 16 16" fill="none" stroke-linecap="round">
<path d="M3.4 10 A4.4 4.4 0 0 1 8 3.6" stroke="#4cc83e" stroke-width="3.3"/><path d="M12.6 6 A4.4 4.4 0 0 1 8 12.4" stroke="#74e060" stroke-width="3.3"/>
<path d="M7 0.6 L11.4 3.6 L7.2 6.8Z" fill="#4cc83e"/><path d="M9 9.2 L4.6 12.4 L8.8 15.4Z" fill="#74e060"/></svg>
<span class="t" style="left:57.90px;top:728.95px;font-size:14.3px;line-height:20px;color:#fff;letter-spacing:0.094px;">Textures</span>
<svg style="left:140px;top:727px" width="20" height="20" viewBox="-10 -10 20 20"><ellipse cx="0" cy="-5.3" rx="2.6" ry="3.9" fill="#c2b2ea" transform="rotate(0)"/><ellipse cx="0" cy="-5.3" rx="2.6" ry="3.9" fill="#a896d8" transform="rotate(45)"/><ellipse cx="0" cy="-5.3" rx="2.6" ry="3.9" fill="#c6b6ee" transform="rotate(90)"/><ellipse cx="0" cy="-5.3" rx="2.6" ry="3.9" fill="#a08ed0" transform="rotate(135)"/><ellipse cx="0" cy="-5.3" rx="2.6" ry="3.9" fill="#b4a4e2" transform="rotate(180)"/><ellipse cx="0" cy="-5.3" rx="2.6" ry="3.9" fill="#9d8bce" transform="rotate(225)"/><ellipse cx="0" cy="-5.3" rx="2.6" ry="3.9" fill="#b9a9e6" transform="rotate(270)"/><ellipse cx="0" cy="-5.3" rx="2.6" ry="3.9" fill="#a694d6" transform="rotate(315)"/><circle cx="-.6" cy="-.2" r="2.3" fill="#4e3c80"/><circle cx="-.6" cy="-.2" r="1" fill="#33265a"/></svg>
<span class="t" style="left:162.70px;top:728.95px;font-size:14.3px;line-height:20px;color:#fff;letter-spacing:0.558px;">textures\melodic\emmafrost\e...</span>
<span class="t" style="left:392.80px;top:728.95px;font-size:14.3px;line-height:20px;color:#fff;width:12px;overflow:hidden;">Si</span>
<div class="b" style="left:5px;top:751px;width:400px;height:24px;background:#323232;"></div>
<span class="t" style="left:57.90px;top:753.95px;font-size:14.3px;line-height:20px;color:#fff;letter-spacing:0.094px;">Textures</span>
<svg style="left:140px;top:752px" width="20" height="20" viewBox="-10 -10 20 20"><ellipse cx="0" cy="-5.3" rx="2.6" ry="3.9" fill="#c2b2ea" transform="rotate(0)"/><ellipse cx="0" cy="-5.3" rx="2.6" ry="3.9" fill="#a896d8" transform="rotate(45)"/><ellipse cx="0" cy="-5.3" rx="2.6" ry="3.9" fill="#c6b6ee" transform="rotate(90)"/><ellipse cx="0" cy="-5.3" rx="2.6" ry="3.9" fill="#a08ed0" transform="rotate(135)"/><ellipse cx="0" cy="-5.3" rx="2.6" ry="3.9" fill="#b4a4e2" transform="rotate(180)"/><ellipse cx="0" cy="-5.3" rx="2.6" ry="3.9" fill="#9d8bce" transform="rotate(225)"/><ellipse cx="0" cy="-5.3" rx="2.6" ry="3.9" fill="#b9a9e6" transform="rotate(270)"/><ellipse cx="0" cy="-5.3" rx="2.6" ry="3.9" fill="#a694d6" transform="rotate(315)"/><circle cx="-.6" cy="-.2" r="2.3" fill="#4e3c80"/><circle cx="-.6" cy="-.2" r="1" fill="#33265a"/></svg>
<span class="t" style="left:162.70px;top:753.95px;font-size:14.3px;line-height:20px;color:#fff;letter-spacing:0.558px;">textures\melodic\emmafrost\e...</span>
<span class="t" style="left:392.80px;top:753.95px;font-size:14.3px;line-height:20px;color:#fff;width:12px;overflow:hidden;">Si</span>
<span class="t" style="left:57.90px;top:778.95px;font-size:14.3px;line-height:20px;color:#fff;letter-spacing:0.094px;">Textures</span>
<svg style="left:140px;top:777px" width="20" height="20" viewBox="-10 -10 20 20"><ellipse cx="0" cy="-5.3" rx="2.6" ry="3.9" fill="#c2b2ea" transform="rotate(0)"/><ellipse cx="0" cy="-5.3" rx="2.6" ry="3.9" fill="#a896d8" transform="rotate(45)"/><ellipse cx="0" cy="-5.3" rx="2.6" ry="3.9" fill="#c6b6ee" transform="rotate(90)"/><ellipse cx="0" cy="-5.3" rx="2.6" ry="3.9" fill="#a08ed0" transform="rotate(135)"/><ellipse cx="0" cy="-5.3" rx="2.6" ry="3.9" fill="#b4a4e2" transform="rotate(180)"/><ellipse cx="0" cy="-5.3" rx="2.6" ry="3.9" fill="#9d8bce" transform="rotate(225)"/><ellipse cx="0" cy="-5.3" rx="2.6" ry="3.9" fill="#b9a9e6" transform="rotate(270)"/><ellipse cx="0" cy="-5.3" rx="2.6" ry="3.9" fill="#a694d6" transform="rotate(315)"/><circle cx="-.6" cy="-.2" r="2.3" fill="#4e3c80"/><circle cx="-.6" cy="-.2" r="1" fill="#33265a"/></svg>
<span class="t" style="left:392.80px;top:778.95px;font-size:14.3px;line-height:20px;color:#fff;width:12px;overflow:hidden;">Si</span>
<div class="b" style="left:5px;top:801px;width:400px;height:24px;background:#323232;"></div>
<span class="t" style="left:57.90px;top:803.95px;font-size:14.3px;line-height:20px;color:#fff;letter-spacing:0.094px;">Textures</span>
<svg style="left:140px;top:802px" width="20" height="20" viewBox="-10 -10 20 20"><ellipse cx="0" cy="-5.3" rx="2.6" ry="3.9" fill="#c2b2ea" transform="rotate(0)"/><ellipse cx="0" cy="-5.3" rx="2.6" ry="3.9" fill="#a896d8" transform="rotate(45)"/><ellipse cx="0" cy="-5.3" rx="2.6" ry="3.9" fill="#c6b6ee" transform="rotate(90)"/><ellipse cx="0" cy="-5.3" rx="2.6" ry="3.9" fill="#a08ed0" transform="rotate(135)"/><ellipse cx="0" cy="-5.3" rx="2.6" ry="3.9" fill="#b4a4e2" transform="rotate(180)"/><ellipse cx="0" cy="-5.3" rx="2.6" ry="3.9" fill="#9d8bce" transform="rotate(225)"/><ellipse cx="0" cy="-5.3" rx="2.6" ry="3.9" fill="#b9a9e6" transform="rotate(270)"/><ellipse cx="0" cy="-5.3" rx="2.6" ry="3.9" fill="#a694d6" transform="rotate(315)"/><circle cx="-.6" cy="-.2" r="2.3" fill="#4e3c80"/><circle cx="-.6" cy="-.2" r="1" fill="#33265a"/></svg>
<span class="t" style="left:392.80px;top:803.95px;font-size:14.3px;line-height:20px;color:#fff;width:12px;overflow:hidden;">Si</span>
<div class="b" style="left:5px;top:826px;width:400px;height:25px;background:#cccccc;"></div>
<span class="t" style="left:57.90px;top:828.95px;font-size:14.3px;line-height:20px;color:#000;letter-spacing:0.094px;">Textures</span>
<svg style="left:140px;top:827px" width="20" height="20" viewBox="-10 -10 20 20"><ellipse cx="0" cy="-5.3" rx="2.6" ry="3.9" fill="#c2b2ea" transform="rotate(0)"/><ellipse cx="0" cy="-5.3" rx="2.6" ry="3.9" fill="#a896d8" transform="rotate(45)"/><ellipse cx="0" cy="-5.3" rx="2.6" ry="3.9" fill="#c6b6ee" transform="rotate(90)"/><ellipse cx="0" cy="-5.3" rx="2.6" ry="3.9" fill="#a08ed0" transform="rotate(135)"/><ellipse cx="0" cy="-5.3" rx="2.6" ry="3.9" fill="#b4a4e2" transform="rotate(180)"/><ellipse cx="0" cy="-5.3" rx="2.6" ry="3.9" fill="#9d8bce" transform="rotate(225)"/><ellipse cx="0" cy="-5.3" rx="2.6" ry="3.9" fill="#b9a9e6" transform="rotate(270)"/><ellipse cx="0" cy="-5.3" rx="2.6" ry="3.9" fill="#a694d6" transform="rotate(315)"/><circle cx="-.6" cy="-.2" r="2.3" fill="#4e3c80"/><circle cx="-.6" cy="-.2" r="1" fill="#33265a"/></svg>
<span class="t" style="left:162.70px;top:828.95px;font-size:14.3px;line-height:20px;color:#000;letter-spacing:0.286px;">textures\cubemaps\chrome_e.dds</span>
<span class="t" style="left:392.80px;top:828.95px;font-size:14.3px;line-height:20px;color:#000;width:12px;overflow:hidden;">Si</span>
<div class="b" style="left:5px;top:851px;width:400px;height:24px;background:#323232;"></div>
<span class="t" style="left:57.90px;top:853.95px;font-size:14.3px;line-height:20px;color:#fff;letter-spacing:0.094px;">Textures</span>
<svg style="left:140px;top:852px" width="20" height="20" viewBox="-10 -10 20 20"><ellipse cx="0" cy="-5.3" rx="2.6" ry="3.9" fill="#c2b2ea" transform="rotate(0)"/><ellipse cx="0" cy="-5.3" rx="2.6" ry="3.9" fill="#a896d8" transform="rotate(45)"/><ellipse cx="0" cy="-5.3" rx="2.6" ry="3.9" fill="#c6b6ee" transform="rotate(90)"/><ellipse cx="0" cy="-5.3" rx="2.6" ry="3.9" fill="#a08ed0" transform="rotate(135)"/><ellipse cx="0" cy="-5.3" rx="2.6" ry="3.9" fill="#b4a4e2" transform="rotate(180)"/><ellipse cx="0" cy="-5.3" rx="2.6" ry="3.9" fill="#9d8bce" transform="rotate(225)"/><ellipse cx="0" cy="-5.3" rx="2.6" ry="3.9" fill="#b9a9e6" transform="rotate(270)"/><ellipse cx="0" cy="-5.3" rx="2.6" ry="3.9" fill="#a694d6" transform="rotate(315)"/><circle cx="-.6" cy="-.2" r="2.3" fill="#4e3c80"/><circle cx="-.6" cy="-.2" r="1" fill="#33265a"/></svg>
<span class="t" style="left:392.80px;top:853.95px;font-size:14.3px;line-height:20px;color:#fff;width:12px;overflow:hidden;">Si</span>
<span class="t" style="left:57.90px;top:878.95px;font-size:14.3px;line-height:20px;color:#fff;letter-spacing:0.094px;">Textures</span>
<svg style="left:140px;top:877px" width="20" height="20" viewBox="-10 -10 20 20"><ellipse cx="0" cy="-5.3" rx="2.6" ry="3.9" fill="#c2b2ea" transform="rotate(0)"/><ellipse cx="0" cy="-5.3" rx="2.6" ry="3.9" fill="#a896d8" transform="rotate(45)"/><ellipse cx="0" cy="-5.3" rx="2.6" ry="3.9" fill="#c6b6ee" transform="rotate(90)"/><ellipse cx="0" cy="-5.3" rx="2.6" ry="3.9" fill="#a08ed0" transform="rotate(135)"/><ellipse cx="0" cy="-5.3" rx="2.6" ry="3.9" fill="#b4a4e2" transform="rotate(180)"/><ellipse cx="0" cy="-5.3" rx="2.6" ry="3.9" fill="#9d8bce" transform="rotate(225)"/><ellipse cx="0" cy="-5.3" rx="2.6" ry="3.9" fill="#b9a9e6" transform="rotate(270)"/><ellipse cx="0" cy="-5.3" rx="2.6" ry="3.9" fill="#a694d6" transform="rotate(315)"/><circle cx="-.6" cy="-.2" r="2.3" fill="#4e3c80"/><circle cx="-.6" cy="-.2" r="1" fill="#33265a"/></svg>
<span class="t" style="left:392.80px;top:878.95px;font-size:14.3px;line-height:20px;color:#fff;width:12px;overflow:hidden;">Si</span>
<div class="b" style="left:5px;top:901px;width:400px;height:24px;background:#323232;"></div>
<span class="t" style="left:57.90px;top:903.95px;font-size:14.3px;line-height:20px;color:#fff;letter-spacing:0.094px;">Textures</span>
<svg style="left:140px;top:902px" width="20" height="20" viewBox="-10 -10 20 20"><ellipse cx="0" cy="-5.3" rx="2.6" ry="3.9" fill="#c2b2ea" transform="rotate(0)"/><ellipse cx="0" cy="-5.3" rx="2.6" ry="3.9" fill="#a896d8" transform="rotate(45)"/><ellipse cx="0" cy="-5.3" rx="2.6" ry="3.9" fill="#c6b6ee" transform="rotate(90)"/><ellipse cx="0" cy="-5.3" rx="2.6" ry="3.9" fill="#a08ed0" transform="rotate(135)"/><ellipse cx="0" cy="-5.3" rx="2.6" ry="3.9" fill="#b4a4e2" transform="rotate(180)"/><ellipse cx="0" cy="-5.3" rx="2.6" ry="3.9" fill="#9d8bce" transform="rotate(225)"/><ellipse cx="0" cy="-5.3" rx="2.6" ry="3.9" fill="#b9a9e6" transform="rotate(270)"/><ellipse cx="0" cy="-5.3" rx="2.6" ry="3.9" fill="#a694d6" transform="rotate(315)"/><circle cx="-.6" cy="-.2" r="2.3" fill="#4e3c80"/><circle cx="-.6" cy="-.2" r="1" fill="#33265a"/></svg>
<span class="t" style="left:392.80px;top:903.95px;font-size:14.3px;line-height:20px;color:#fff;width:12px;overflow:hidden;">Si</span>
<span class="t" style="left:57.90px;top:928.95px;font-size:14.3px;line-height:20px;color:#fff;letter-spacing:0.094px;">Textures</span>
<svg style="left:140px;top:927px" width="20" height="20" viewBox="-10 -10 20 20"><ellipse cx="0" cy="-5.3" rx="2.6" ry="3.9" fill="#c2b2ea" transform="rotate(0)"/><ellipse cx="0" cy="-5.3" rx="2.6" ry="3.9" fill="#a896d8" transform="rotate(45)"/><ellipse cx="0" cy="-5.3" rx="2.6" ry="3.9" fill="#c6b6ee" transform="rotate(90)"/><ellipse cx="0" cy="-5.3" rx="2.6" ry="3.9" fill="#a08ed0" transform="rotate(135)"/><ellipse cx="0" cy="-5.3" rx="2.6" ry="3.9" fill="#b4a4e2" transform="rotate(180)"/><ellipse cx="0" cy="-5.3" rx="2.6" ry="3.9" fill="#9d8bce" transform="rotate(225)"/><ellipse cx="0" cy="-5.3" rx="2.6" ry="3.9" fill="#b9a9e6" transform="rotate(270)"/><ellipse cx="0" cy="-5.3" rx="2.6" ry="3.9" fill="#a694d6" transform="rotate(315)"/><circle cx="-.6" cy="-.2" r="2.3" fill="#4e3c80"/><circle cx="-.6" cy="-.2" r="1" fill="#33265a"/></svg>
<span class="t" style="left:392.80px;top:928.95px;font-size:14.3px;line-height:20px;color:#fff;width:12px;overflow:hidden;">Si</span>
<div class="b" style="left:5px;top:990px;width:400px;height:16px;background:#3e3e3e;box-sizing:border-box;border:1px solid #4a4a4a;"></div>
<div class="b" style="left:5px;top:990px;width:16px;height:16px;background:#3c3c3c;box-sizing:border-box;border:1px solid #565656;"></div>
<div class="b" style="left:389px;top:990px;width:16px;height:16px;background:#3c3c3c;box-sizing:border-box;border:1px solid #565656;"></div>
<div class="b" style="left:22px;top:990px;width:287px;height:16px;background:#4e4e4e;box-sizing:border-box;border:1px solid #666;"></div>
<svg style="left:9px;top:994px" width="8" height="8" viewBox="0 0 8 8"><path d="M6 .5 V7.5 L1.5 4Z" fill="#c8c8c8"/></svg>
<svg style="left:393px;top:994px" width="8" height="8" viewBox="0 0 8 8"><path d="M2 .5 V7.5 L6.5 4Z" fill="#c8c8c8"/></svg>
<div class="b" style="left:418px;top:103px;width:1502px;height:903px;background:#2e2e2e;"></div>
<svg style="left:418px;top:103px;overflow:hidden" width="1502" height="903" viewBox="418 103 1502 903"><g stroke-width="1" fill="none"><path d="M-2339.7 812.50 H4676.7" stroke="#363636"/><path d="M-1076.8 719.50 H3413.8" stroke="#363636"/><path d="M-482.4 675.50 H2819.4" stroke="#363636"/><path d="M-136.9 650.50 H2473.9" stroke="#363636"/><path d="M89.0 633.50 H2248.0" stroke="#363636"/><path d="M248.3 621.50 H2088.7" stroke="#363636"/><path d="M366.6 613.50 H1970.4" stroke="#363636"/><path d="M462.1 609.69 L-4642.9 1010" stroke="#363636"/><path d="M556.3 609.69 L-3868.1 1010" stroke="#363636"/><path d="M650.5 609.69 L-3093.2 1010" stroke="#363636"/><path d="M744.7 609.69 L-2318.3 1010" stroke="#363636"/><path d="M838.9 609.69 L-1543.5 1010" stroke="#363636"/><path d="M933.0 609.69 L-768.6 1010" stroke="#363636"/><path d="M1027.2 609.69 L6.2 1010" stroke="#363636"/><path d="M1121.4 609.69 L781.1 1010" stroke="#363636"/><path d="M1215.6 609.69 L1555.9 1010" stroke="#363636"/><path d="M1309.8 609.69 L2330.8 1010" stroke="#363636"/><path d="M1404.0 609.69 L3105.6 1010" stroke="#363636"/><path d="M1498.1 609.69 L3880.5 1010" stroke="#363636"/><path d="M1592.3 609.69 L4655.3 1010" stroke="#363636"/><path d="M1686.5 609.69 L5430.2 1010" stroke="#363636"/><path d="M1780.7 609.69 L6205.1 1010" stroke="#363636"/><path d="M1874.9 609.69 L6979.9 1010" stroke="#363636"/><path d="M-3712.3 913.50 H6049.3" stroke="#666666"/><path d="M-1569.6 755.50 H3906.6" stroke="#666666"/><path d="M-734.3 694.50 H3071.3" stroke="#666666"/><path d="M-289.5 661.50 H2626.5" stroke="#666666"/><path d="M-13.2 641.50 H2350.2" stroke="#666666"/><path d="M175.0 627.50 H2162.0" stroke="#666666"/><path d="M311.5 617.50 H2025.5" stroke="#666666"/><path d="M415.0 609.50 H1922.0" stroke="#666666"/><path d="M415.0 609.69 L-5030.3 1010" stroke="#606060"/><path d="M509.2 609.69 L-4255.5 1010" stroke="#606060"/><path d="M603.4 609.69 L-3480.6 1010" stroke="#606060"/><path d="M697.6 609.69 L-2705.8 1010" stroke="#606060"/><path d="M791.8 609.69 L-1930.9 1010" stroke="#606060"/><path d="M886.0 609.69 L-1156.1 1010" stroke="#606060"/><path d="M980.1 609.69 L-381.2 1010" stroke="#606060"/><path d="M1074.3 609.69 L393.6 1010" stroke="#606060"/><path d="M1168.5 609.69 L1168.5 1010" stroke="#606060"/><path d="M1262.7 609.69 L1943.4 1010" stroke="#606060"/><path d="M1356.9 609.69 L2718.2 1010" stroke="#606060"/><path d="M1451.0 609.69 L3493.1 1010" stroke="#606060"/><path d="M1545.2 609.69 L4267.9 1010" stroke="#606060"/><path d="M1639.4 609.69 L5042.8 1010" stroke="#606060"/><path d="M1733.6 609.69 L5817.6 1010" stroke="#606060"/><path d="M1827.8 609.69 L6592.5 1010" stroke="#606060"/><path d="M1922.0 609.69 L7367.3 1010" stroke="#606060"/></g><defs>
<linearGradient id="gb" x1="0" y1="0" x2="0" y2="1"><stop offset="0" stop-color="#8b8f91"/><stop offset=".12" stop-color="#747879"/><stop offset="1" stop-color="#6a6d6e"/></linearGradient>
<linearGradient id="gw" x1="0" y1="0" x2="0" y2="1"><stop offset="0" stop-color="#ffffff"/><stop offset=".93" stop-color="#fdfeff"/><stop offset="1" stop-color="#dfeaf0"/></linearGradient>
<linearGradient id="gr" x1="0" y1="0" x2="1" y2="0"><stop offset="0" stop-color="#f4f6f6"/><stop offset=".5" stop-color="#9ea2a3"/><stop offset="1" stop-color="#e6e8e8"/></linearGradient>
<linearGradient id="gh" x1="0" y1="0" x2="1" y2="0"><stop offset="0" stop-color="#c8cdd0" stop-opacity=".5"/><stop offset=".16" stop-color="#c8cdd0" stop-opacity="0"/><stop offset=".84" stop-color="#c8cdd0" stop-opacity="0"/><stop offset="1" stop-color="#c8cdd0" stop-opacity=".5"/></linearGradient>
<filter id="bl"><feGaussianBlur stdDeviation="2.5"/></filter>
</defs><path d="M957.0 484.6 C961.2 485.3 972.7 487.2 982.1 488.7 C991.5 490.2 1002.8 491.8 1013.2 493.4 C1023.6 494.9 1034.0 496.4 1044.3 498.0 C1054.6 499.6 1064.9 501.6 1075.3 503.2 C1085.7 504.8 1096.0 506.2 1106.4 507.4 C1116.8 508.6 1127.2 509.8 1137.5 510.6 C1147.8 511.4 1158.2 512.0 1168.5 512.0 C1178.8 512.0 1190.6 511.3 1199.5 510.6 C1208.4 509.9 1213.1 509.1 1222.1 507.8 C1231.0 506.5 1242.8 504.6 1253.2 503.0 C1263.6 501.4 1274.0 499.6 1284.3 498.0 C1294.6 496.4 1304.9 494.9 1315.3 493.4 C1325.7 491.8 1335.6 490.2 1346.4 488.7 C1357.2 487.2 1374.4 485.3 1380.0 484.6 L1380.0 498.8 C1377.0 499.8 1367.5 502.4 1361.9 505.0 C1356.3 507.6 1351.6 510.5 1346.4 514.4 C1341.2 518.3 1336.1 523.4 1330.9 528.3 C1325.7 533.2 1320.5 539.0 1315.3 543.9 C1310.1 548.8 1304.2 553.8 1299.8 557.9 C1295.4 562.0 1292.3 564.6 1288.9 568.7 C1285.5 572.8 1281.1 580.4 1279.6 582.7 L1253 593 L1169 603 L1085 593 L1058.2 582.7 C1056.7 580.4 1052.5 573.1 1048.9 568.7 C1045.3 564.3 1041.2 560.9 1036.5 556.3 C1031.8 551.6 1026.2 545.7 1021.0 540.8 C1015.8 535.9 1010.6 531.2 1005.4 526.8 C1000.2 522.4 995.1 518.0 989.9 514.4 C984.7 510.8 980.0 507.5 974.4 505.0 C968.8 502.5 959.5 500.5 956.5 499.6 Z" fill="url(#gb)"/><path d="M957.0 484.6 C961.2 485.3 972.7 487.2 982.1 488.7 C991.5 490.2 1002.8 491.8 1013.2 493.4 C1023.6 494.9 1034.0 496.4 1044.3 498.0 C1054.6 499.6 1064.9 501.6 1075.3 503.2 C1085.7 504.8 1096.0 506.2 1106.4 507.4 C1116.8 508.6 1127.2 509.8 1137.5 510.6 C1147.8 511.4 1158.2 512.0 1168.5 512.0 C1178.8 512.0 1190.6 511.3 1199.5 510.6 C1208.4 509.9 1213.1 509.1 1222.1 507.8 C1231.0 506.5 1242.8 504.6 1253.2 503.0 C1263.6 501.4 1274.0 499.6 1284.3 498.0 C1294.6 496.4 1304.9 494.9 1315.3 493.4 C1325.7 491.8 1335.6 490.2 1346.4 488.7 C1357.2 487.2 1374.4 485.3 1380.0 484.6 L1380.0 498.8 C1377.0 499.8 1367.5 502.4 1361.9 505.0 C1356.3 507.6 1351.6 510.5 1346.4 514.4 C1341.2 518.3 1336.1 523.4 1330.9 528.3 C1325.7 533.2 1320.5 539.0 1315.3 543.9 C1310.1 548.8 1304.2 553.8 1299.8 557.9 C1295.4 562.0 1292.3 564.6 1288.9 568.7 C1285.5 572.8 1281.1 580.4 1279.6 582.7 L1253 593 L1169 603 L1085 593 L1058.2 582.7 C1056.7 580.4 1052.5 573.1 1048.9 568.7 C1045.3 564.3 1041.2 560.9 1036.5 556.3 C1031.8 551.6 1026.2 545.7 1021.0 540.8 C1015.8 535.9 1010.6 531.2 1005.4 526.8 C1000.2 522.4 995.1 518.0 989.9 514.4 C984.7 510.8 980.0 507.5 974.4 505.0 C968.8 502.5 959.5 500.5 956.5 499.6 Z" fill="url(#gh)"/><g filter="url(#bl)" opacity=".4"><path d="M1006 496 L1050 503 L1078 517 L1052 519 L1062 534 L1046 545 L1030 528 Z" fill="#b4babd"/><path d="M1331 496 L1287 503 L1259 517 L1285 519 L1275 534 L1291 545 L1307 528 Z" fill="#b4babd"/></g><path d="M957.0 485.5 C961.2 486.2 972.7 488.1 982.1 489.6 C991.5 491.1 1002.8 492.7 1013.2 494.3 C1023.6 495.8 1034.0 497.3 1044.3 498.9 C1054.6 500.5 1064.9 502.5 1075.3 504.1 C1085.7 505.7 1096.0 507.1 1106.4 508.3 C1116.8 509.5 1127.2 510.7 1137.5 511.5 C1147.8 512.3 1158.2 512.9 1168.5 512.9 C1178.8 512.9 1190.6 512.2 1199.5 511.5 C1208.4 510.8 1213.1 510.0 1222.1 508.7 C1231.0 507.4 1242.8 505.5 1253.2 503.9 C1263.6 502.3 1274.0 500.5 1284.3 498.9 C1294.6 497.3 1304.9 495.8 1315.3 494.3 C1325.7 492.7 1335.6 491.1 1346.4 489.6 C1357.2 488.1 1374.4 486.2 1380.0 485.5 " fill="none" stroke="#a2a7a9" stroke-width="1.7"/><path d="M950.3 477.9 C949.1 479.2 945.4 480.8 943.3 485.6 C941.2 490.4 937.9 500.5 937.9 506.6 C937.9 512.7 940.3 515.4 943.3 522.1 C946.3 528.8 951.0 538.5 955.7 547.0 C960.4 555.5 966.6 566.1 971.3 573.4 C976.0 580.7 979.4 585.0 984.0 591.0 C988.6 597.0 992.1 601.3 998.8 609.5 C1005.5 617.7 1016.3 630.6 1024.1 640.2 C1031.9 649.9 1038.5 658.5 1045.4 667.4 C1052.4 676.3 1059.3 685.5 1065.8 693.6 C1072.3 701.7 1078.6 708.3 1084.3 715.9 C1090.0 723.5 1095.3 732.6 1099.8 739.2 C1104.3 745.8 1106.7 749.6 1111.5 755.7 C1116.3 761.9 1124.2 771.1 1128.9 776.1 C1133.6 781.1 1136.4 783.2 1139.4 786.0 C1142.5 788.8 1145.1 791.2 1147.2 792.6 C1149.3 794.0 1151.2 793.9 1152.0 794.2 L1185.5 794.2 C1186.2 793.9 1188.4 793.5 1190.0 792.6 C1191.6 791.7 1192.8 791.1 1195.3 789.0 C1197.8 786.9 1200.3 785.5 1205.2 780.0 C1210.1 774.5 1219.2 762.8 1224.7 755.7 C1230.2 748.6 1233.5 743.9 1238.3 737.3 C1243.1 730.7 1248.3 723.0 1253.8 715.9 C1259.3 708.8 1264.5 703.3 1271.3 694.6 C1278.1 685.9 1287.5 672.6 1294.6 663.5 C1301.7 654.4 1306.9 649.3 1314.0 640.2 C1321.1 631.1 1330.8 617.8 1337.3 609.1 C1343.8 600.4 1347.6 595.2 1353.0 588.0 C1358.4 580.8 1364.3 573.5 1369.7 565.6 C1375.1 557.7 1380.8 548.6 1385.2 540.8 C1389.6 533.0 1393.6 524.7 1396.1 519.0 C1398.6 513.3 1400.3 512.2 1400.0 506.6 C1399.7 501.0 1396.7 490.4 1394.5 485.6 C1392.3 480.8 1388.1 479.2 1386.8 477.9 L1383 490 L1385.2 509.7 C1383.9 511.8 1381.4 517.4 1377.5 522.1 C1373.6 526.8 1367.1 533.2 1361.9 537.7 C1356.7 542.2 1351.6 545.7 1346.4 549.3 C1341.2 552.9 1336.1 556.2 1330.9 559.4 C1325.7 562.6 1320.5 566.1 1315.3 568.7 C1310.1 571.4 1305.0 573.2 1299.8 575.3 C1294.6 577.4 1292.1 578.7 1284.3 581.2 C1276.5 583.7 1263.6 587.9 1253.2 590.5 C1242.8 593.1 1232.4 595.2 1222.1 596.7 C1211.8 598.2 1200.0 598.8 1191.1 599.4 C1182.2 600.0 1177.4 600.3 1168.5 600.2 C1159.6 600.1 1147.8 599.7 1137.5 599.0 C1127.2 598.3 1116.8 597.6 1106.4 595.9 C1096.0 594.2 1083.6 591.1 1075.3 588.9 C1067.0 586.7 1063.2 585.0 1056.7 582.7 C1050.2 580.4 1043.8 578.5 1036.5 574.9 C1029.2 571.3 1021.0 566.2 1013.2 561.0 C1005.4 555.8 997.7 549.9 989.9 543.9 C982.1 537.9 973.1 530.6 966.6 525.2 C960.1 519.8 953.7 513.6 951.1 511.3 L954 490 Z" fill="url(#gw)"/><path d="M1361.9 540.9 C1359.3 542.8 1351.6 548.9 1346.4 552.5 C1341.2 556.1 1336.1 559.4 1330.9 562.6 C1325.7 565.8 1320.5 569.3 1315.3 571.9 C1310.1 574.6 1305.0 576.4 1299.8 578.5 C1294.6 580.6 1292.1 581.9 1284.3 584.4 C1276.5 586.9 1263.6 591.1 1253.2 593.7 C1242.8 596.3 1232.4 598.4 1222.1 599.9 C1211.8 601.4 1200.0 602.0 1191.1 602.6 C1182.2 603.2 1177.4 603.5 1168.5 603.4 C1159.6 603.3 1147.8 602.9 1137.5 602.2 C1127.2 601.5 1116.8 600.8 1106.4 599.1 C1096.0 597.4 1083.6 594.3 1075.3 592.1 C1067.0 589.9 1063.2 588.2 1056.7 585.9 C1050.2 583.6 1043.8 581.7 1036.5 578.1 C1029.2 574.5 1021.0 569.4 1013.2 564.2 C1005.4 559.0 993.8 550.0 989.9 547.1 " fill="none" stroke="#e9eef2" stroke-width="1"/><path d="M943.6 484.2 Q946.5 478.6 950.6 477.8 Q956.4 478.4 958.2 483.4 Q959.2 487 958 492 L954.4 507.6 Q952.6 512 949.4 511.4 L944.6 507.8 L938.2 508.4 Q937.4 503 939.4 496.4 Z" fill="#e6e9ea"/><path d="M946 486.5 Q948.5 482 952 484 L947.5 503.5 M952.8 485 Q955.6 486 954.8 491 L951.4 506" fill="none" stroke="#9da2a5" stroke-width="1" opacity=".8"/><g transform="translate(2337 0) scale(-1 1)"><path d="M943.6 484.2 Q946.5 478.6 950.6 477.8 Q956.4 478.4 958.2 483.4 Q959.2 487 958 492 L954.4 507.6 Q952.6 512 949.4 511.4 L944.6 507.8 L938.2 508.4 Q937.4 503 939.4 496.4 Z" fill="#e6e9ea"/><path d="M946 486.5 Q948.5 482 952 484 L947.5 503.5 M952.8 485 Q955.6 486 954.8 491 L951.4 506" fill="none" stroke="#9da2a5" stroke-width="1" opacity=".8"/></g><g fill="#e9f2f6" opacity=".45"><rect x="1164" y="680" width="7" height="11" rx="1"/><rect x="1162" y="697" width="12" height="3"/><rect x="1163" y="720" width="11" height="2"/></g><path d="M444.5 942.5 H480" stroke="#cc1515" stroke-width="2.2"/><path d="M480.6 905.5 V941" stroke="#0b0bb8" stroke-width="2.4"/><rect x="479" y="941" width="3.2" height="3.2" fill="#8be870"/><circle cx="445.5" cy="942.5" r="1.6" fill="#cc1515"/><circle cx="480.6" cy="906" r="1.5" fill="#0b0bb8"/></svg>
<div class="b" style="left:0px;top:1006px;width:1920px;height:24px;background:#3c3c3c;"></div>
<span class="t" style="left:1313.00px;top:1010.13px;font-size:12.6px;line-height:18px;color:#fff;letter-spacing:-0.223px;">D:/Games/The Elder Scrolls V Skyrim - Special Edition/Data/meshes/Melodic/Emma Frost/WQPanties_0.nif</span>
<svg style="left:1900px;top:1011px" width="16" height="14" viewBox="0 0 16 14">
<path d="M3 4 H14 V13 H3Z" fill="#f3d9a8"/><path d="M1.5 7 H12 L13.5 13 H3Z" fill="#e6b86a"/>
<path d="M2 5 A3.2 3.2 0 0 1 8 3" fill="none" stroke="#5a9ab0" stroke-width="1.8"/><path d="M7 .5 L10.5 3 L7 5Z" fill="#5a9ab0"/></svg>
<div class="b" style="left:245px;top:546px;width:315px;height:202px;background:#555555;box-shadow:1px 1px 2.5px 0.5px rgba(0,0,0,.6);"></div>
<span class="t" style="left:249.00px;top:549.65px;font-size:14.3px;line-height:20px;color:#fff;letter-spacing:0.090px;font-weight:bold;">BSLightingShaderProperty</span>
<span class="t" style="left:249.00px;top:581.65px;font-size:14.3px;line-height:20px;color:#fff;letter-spacing:0.258px;">Bethesda shader property for Skyrim and later.</span>
<span class="t" style="left:249.00px;top:613.65px;font-size:14.3px;line-height:20px;color:#fff;">Ancestors:</span>
<div class="b" style="left:279.5px;top:653.1px;width:5px;height:5px;border-radius:50%;background:#fff"></div>
<span class="t" style="left:288.80px;top:645.75px;font-size:14.3px;line-height:20px;color:#fff;letter-spacing:0.031px;">BSShaderProperty</span>
<div class="b" style="left:279.5px;top:673.1px;width:5px;height:5px;border-radius:50%;background:#fff"></div>
<span class="t" style="left:288.80px;top:665.80px;font-size:14.3px;line-height:20px;color:#fff;letter-spacing:0.272px;">NiShadeProperty</span>
<div class="b" style="left:279.5px;top:693.2px;width:5px;height:5px;border-radius:50%;background:#fff"></div>
<span class="t" style="left:288.80px;top:685.85px;font-size:14.3px;line-height:20px;color:#fff;letter-spacing:0.461px;">NiProperty</span>
<div class="b" style="left:279.5px;top:713.2px;width:5px;height:5px;border-radius:50%;background:#fff"></div>
<span class="t" style="left:288.80px;top:705.90px;font-size:14.3px;line-height:20px;color:#fff;letter-spacing:0.307px;">NiObjectNET</span>
<div class="b" style="left:279.5px;top:733.3px;width:5px;height:5px;border-radius:50%;background:#fff"></div>
<span class="t" style="left:288.80px;top:725.95px;font-size:14.3px;line-height:20px;color:#fff;letter-spacing:0.724px;">NiObject</span>
<svg style="left:0;top:0" width="1920" height="1030" viewBox="0 0 1920 1030"><path d="M227.8 614.8 L229.6 609.5 L232.6 603.6 L250 602.8 L275 602.9 L285 604.6 L293.8 607.2 L326.3 608.3 L361.7 610.1 L397.1 611.3 L432.5 611.8 L467.9 612.4 L503.3 612.4 L535.2 611.8 L541.6 612.7 L540.7 618.9 L538.8 624.4 L503.3 624.9 L467.9 624.4 L432.5 624 L397.1 623.6 L361.7 622.8 L345 622 L320 621.1 L300 619.9 L275 618.6 L250 617.4 L230.5 616.9 Z" fill="#e81c1c" stroke="#e81c1c" stroke-width="0.8" stroke-linejoin="round"/></svg>
</div></body></html>
